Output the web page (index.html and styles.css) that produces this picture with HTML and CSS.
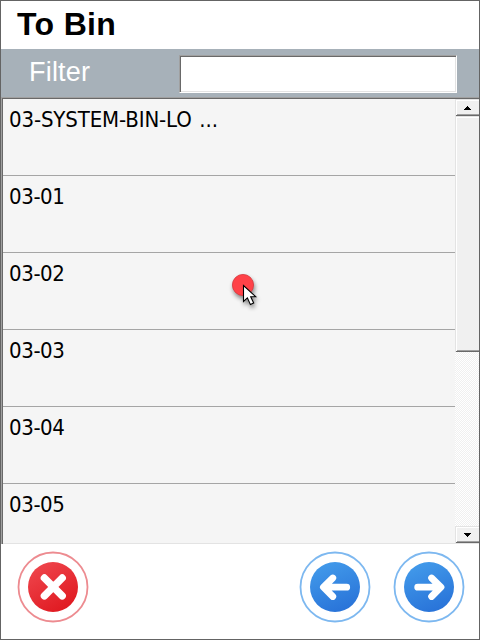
FILE: index.html
```html
<!DOCTYPE html>
<html lang="en">
<head>
<meta charset="utf-8">
<title>To Bin</title>
<link rel="stylesheet" href="styles.css">
</head>
<body>
<main class="window">
  <h1 class="title">To Bin</h1>
  <div class="filter">
    <label class="filter-label" for="filter">Filter</label>
    <input class="filter-input" id="filter" type="text">
  </div>
  <div class="list">
    <ul class="rows">
      <li class="row row-long">03-SYSTEM-BIN-LO ...</li>
      <li class="row">03-01</li>
      <li class="row">03-02</li>
      <li class="row">03-03</li>
      <li class="row">03-04</li>
      <li class="row">03-05</li>
    </ul>
    <div class="scrollbar">
      <div class="raised arrow">
        <svg width="7" height="4" shape-rendering="crispEdges"><path d="M3 0h1v1h1v1h1v1h1v1H0V3h1V2h1V1h1z"/></svg>
      </div>
      <div class="raised thumb"></div>
      <div class="track"></div>
      <div class="raised arrow">
        <svg width="7" height="4" shape-rendering="crispEdges"><path d="M0 0h7v1H6v1H5v1H4v1H3V3H2V2H1V1H0z"/></svg>
      </div>
    </div>
  </div>
  <footer class="actions">
    <svg class="action" width="72" height="72" viewBox="0 0 72 72">
      <defs><linearGradient id="red" x1=".2" y1="0" x2=".8" y2="1"><stop offset="0" stop-color="#ef464d"/><stop offset="1" stop-color="#df171e"/></linearGradient></defs>
      <circle cx="36" cy="36" r="34.5" fill="#fff" stroke="#ed8b90" stroke-width="1.8"/>
      <circle cx="36" cy="36" r="25" fill="url(#red)"/>
      <path d="M27.4 27l17.8 17.8M45.2 27L27.4 44.8" stroke="#fff" stroke-width="7.4" stroke-linecap="round"/>
    </svg>
    <svg class="action action-back" width="72" height="72" viewBox="0 0 72 72">
      <defs><linearGradient id="blue" x1=".3" y1="0" x2=".7" y2="1"><stop offset="0" stop-color="#429aea"/><stop offset="1" stop-color="#2872d8"/></linearGradient></defs>
      <circle cx="36" cy="36" r="34.5" fill="#fff" stroke="#7db8f0" stroke-width="1.8"/>
      <circle cx="36" cy="36" r="25" fill="url(#blue)"/>
      <path d="M47.7 36.2H25M33.8 27l-9.4 9.2 9.4 9.3" fill="none" stroke="#fff" stroke-width="6.8" stroke-linecap="round" stroke-linejoin="round"/>
    </svg>
    <svg class="action" width="72" height="72" viewBox="0 0 72 72">
      <circle cx="36" cy="36" r="34.5" fill="#fff" stroke="#7db8f0" stroke-width="1.8"/>
      <circle cx="36" cy="36" r="25" fill="url(#blue)"/>
      <path d="M24.7 36.2H47M38.6 27l9.4 9.2-9.4 9.3" fill="none" stroke="#fff" stroke-width="6.8" stroke-linecap="round" stroke-linejoin="round"/>
    </svg>
  </footer>
  <svg class="pointer" width="40" height="44" viewBox="0 0 40 44">
    <g class="pointer-shadow">
      <circle cx="15" cy="15" r="10.6" fill="#ff4248" stroke="#d4383e" stroke-width=".8"/>
      <path d="M15.5 15.5v16l3.9-3.6 3 6.7 3.3-1.5-3-6.4h5z" fill="#fff" stroke="#000" stroke-width="1.1"/>
    </g>
  </svg>
</main>
</body>
</html>
```

FILE: styles.css
```css
* { box-sizing: border-box; }

body { margin: 0; background: #fff; }

.window {
  position: relative;
  display: flex;
  flex-direction: column;
  width: 480px;
  height: 640px;
  border: 1px solid #646464;
  background: #fff;
  overflow: hidden;
}

.title {
  flex: none;
  height: 48px;
  margin: 0;
  padding-left: 16px;
  font: bold 32px/46px "Liberation Sans", Arial, sans-serif;
  letter-spacing: .35px;
  color: #000;
}

.filter {
  flex: none;
  display: flex;
  justify-content: space-between;
  height: 48px;
  padding: 6px 22px 4px 28px;
  background: #a7b1b9;
}

.filter-label {
  font: 27px/34px "Liberation Sans", Arial, sans-serif;
  letter-spacing: .2px;
  color: #fff;
}

.filter-input {
  width: 278px;
  height: 38px;
  padding: 0 4px;
  border: 1px solid;
  border-color: #a0a0a0 #fff #fff #a0a0a0;
  border-radius: 0;
  outline: 0;
  background: #fff;
  box-shadow: inset 1px 1px #696969, inset -1px -1px #e3e3e3;
}

.list {
  flex: none;
  display: flex;
  height: 447px;
  padding: 2px 0 1px 2px;
  background: #f5f5f5;
  box-shadow: inset 1px 1px #a0a0a0, inset 2px 2px #696969, inset 0 -1px #e3e3e3;
}

.rows {
  flex: 1;
  margin: 0;
  padding: 0;
  overflow: hidden;
  list-style: none;
}

.row {
  height: 77px;
  padding: 7px 0 0 6px;
  border-bottom: 1px solid #a5a5a5;
  font: 22px/28px "DejaVu Sans Condensed", "DejaVu Sans", sans-serif;
  font-stretch: condensed;
  letter-spacing: -.4px;
  color: #000;
  white-space: nowrap;
}

.row-long { letter-spacing: -.13px; word-spacing: 1.5px; }

.scrollbar {
  display: flex;
  flex-direction: column;
  width: 24px;
}

.raised {
  flex: none;
  background: #f0f0f0;
  box-shadow: inset 1px 1px #e3e3e3, inset 0 -1px #696969, inset 2px 2px #fff, inset 0 -2px #a0a0a0;
}

.arrow {
  display: flex;
  align-items: center;
  justify-content: center;
  height: 17px;
}

.arrow svg { display: block; }

.thumb { height: 236px; }

.track {
  flex: 1;
  background: repeating-conic-gradient(#fff 0 25%, #f0f0f0 0 50%) 0 0 / 2px 2px;
}

.actions {
  flex: 1;
  display: flex;
  align-items: flex-start;
  padding: 7px 14px 0 16px;
}

.action { flex: none; }

.action-back { margin: 0 22px 0 auto; }

.pointer {
  position: absolute;
  left: 227px;
  top: 269px;
}

.pointer-shadow { filter: drop-shadow(1px 3px 2px rgba(0, 0, 0, .45)); }
```
